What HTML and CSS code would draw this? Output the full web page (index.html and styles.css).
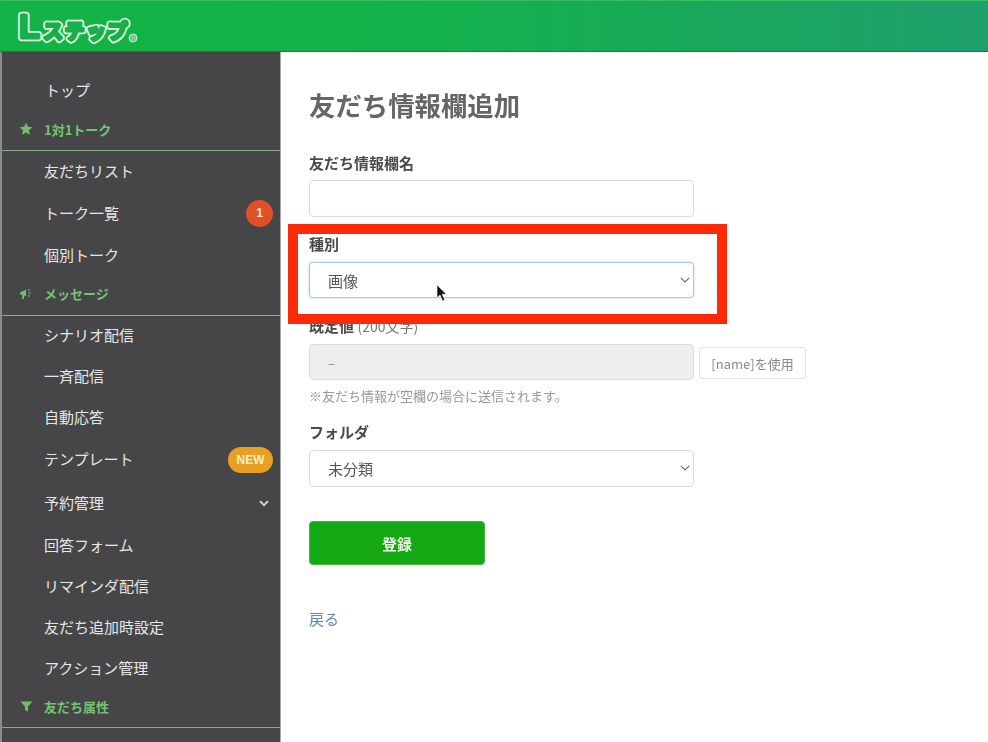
FILE: index.html
```html
<!DOCTYPE html>
<html lang="ja">
<head>
<meta charset="utf-8">
<title>友だち情報欄追加</title>
<link rel="stylesheet" href="styles.css">
</head>
<body>
<div class="page">
  <header class="topbar">
    <svg class="logo" width="125" height="46" viewBox="0 0 125 46">
      <defs>
        <text id="lg-l" class="lg-l" x="5" y="34.500">L</text>
        <text id="lg-k" class="lg-k" x="29" y="35.500">ステップ</text>
      </defs>
      <use href="#lg-l" class="lg-out"/>
      <use href="#lg-k" class="lg-out"/>
      <use href="#lg-l" class="lg-in"/>
      <use href="#lg-k" class="lg-in"/>
      <circle cx="119" cy="35" r="4" fill="#6fcf8e" stroke="#d5efd5" stroke-width="1"/>
    </svg>
  </header>
  <div class="body">
    <nav class="side">
      <a class="item first low">トップ</a>
      <div class="sec sec1">
        <svg class="sec-ic" width="14" height="14" viewBox="0 0 14 14"><path d="M7 .8l1.900 4 4.400.5-3.300 3 .9 4.400L7 10.500l-3.900 2.200.9-4.400-3.300-3 4.400-.5z" fill="#6fbf6a"/></svg>
        <span>1対1トーク</span>
      </div>
      <a class="item i42">友だちリスト</a>
      <a class="item i42">トーク一覧<span class="badge">1</span></a>
      <a class="item i42">個別トーク</a>
      <div class="sec sec2">
        <svg class="sec-ic" width="14" height="12" viewBox="0 0 14 12"><path d="M1 4.500l6-3v7l-2-.9V11H3.200V6.800L1 6.500z" fill="#6fbf6a"/><path d="M9 2.500l2-1M9.500 5h2.500M9 7.500l2 1" stroke="#6fbf6a" stroke-width="1.200" fill="none"/></svg>
        <span>メッセージ</span>
      </div>
      <a class="item low2">シナリオ配信</a>
      <a class="item low2">一斉配信</a>
      <a class="item low2">自動応答</a>
      <a class="item low">テンプレート<span class="new">NEW</span></a>
      <a class="item i45">予約管理
        <svg class="chev" width="10" height="7" viewBox="0 0 10 7"><path d="M1 1.200l4 4 4-4" stroke="#ddd" stroke-width="1.800" fill="none"/></svg>
      </a>
      <a class="item low">回答フォーム</a>
      <a class="item low">リマインダ配信</a>
      <a class="item low">友だち追加時設定</a>
      <a class="item low">アクション管理</a>
      <div class="sec sec3">
        <svg class="sec-ic" width="13" height="11" viewBox="0 0 13 11"><path d="M.5.500h12L8 5.500V10.500L5 9V5.500z" fill="#6fbf6a"/></svg>
        <span>友だち属性</span>
      </div>
      <a class="item">タグ管理</a>
    </nav>
    <main class="main">
      <h1 class="title">友だち情報欄追加</h1>
      <label class="lab lab-name">友だち情報欄名</label>
      <input class="field" type="text">
      <label class="lab lab-kind">種別</label>
      <div class="sel-wrap focus">
        <select class="field sel sel-focus"><option>画像</option></select>
        <svg class="sel-chev" width="10" height="6" viewBox="0 0 10 6"><path d="M.8.800L5 5l4.200-4.200" stroke="#666" stroke-width="1.100" fill="none"/></svg>
      </div>
      <label class="lab lab-def">既定値 <span class="thin">(200文字)</span></label>
      <div class="def-row">
        <input class="field dis" type="text" value="–" disabled>
        <button class="name-btn" type="button">[name]を使用</button>
      </div>
      <p class="hint">※友だち情報が空欄の場合に送信されます。</p>
      <label class="lab lab-folder">フォルダ</label>
      <div class="sel-wrap">
        <select class="field sel"><option>未分類</option></select>
        <svg class="sel-chev" width="10" height="6" viewBox="0 0 10 6"><path d="M.8.800L5 5l4.200-4.200" stroke="#666" stroke-width="1.100" fill="none"/></svg>
      </div>
      <button class="submit" type="button">登録</button>
      <a class="back">戻る</a>
    </main>
  </div>
  <div class="callout"></div>
  <svg class="cursor" width="13" height="19" viewBox="0 0 13 19"><path d="M1 1v13l3-3 2.500 6 2.200-1-2.500-5.800H10.500z" fill="#111" stroke="#fff" stroke-width=".6"/></svg>
</div>
</body>
</html>
```

FILE: styles.css
```css
* { box-sizing: border-box; }
html, body { margin: 0; padding: 0; background: #fff; }
body {
  width: 988px;
  height: 742px;
  overflow: hidden;
  font-family: "Noto Sans CJK JP", "Noto Sans", sans-serif;
}
.page {
  position: relative;
  width: 988px;
  height: 742px;
  overflow: hidden;
  filter: blur(0.45px);
}
.topbar {
  height: 52px;
  background: linear-gradient(90deg, #12b346 0%, #14b04c 45%, #1f9f6c 100%);
  border-top: 1px solid #3bbd62;
  border-bottom: 1px solid #16813f;
  padding-left: 14px;
  display: flex;
  align-items: flex-start;
}
.logo { display: block; margin-top: 2px; }
.lg-l { font: 700 34px "Liberation Sans", sans-serif; }
.lg-k { font: 700 20px "Noto Sans CJK JP", sans-serif; letter-spacing: 1.500px; }
.lg-out { fill: #e2f9df; stroke: #e2f9df; stroke-width: 6.500px; stroke-linejoin: round; stroke-linecap: round; }
.lg-in { fill: #15b04c; stroke: #15b04c; stroke-width: 3px; stroke-linejoin: round; stroke-linecap: round; }
.body { display: flex; height: 690px; }
.side {
  width: 281px;
  flex: none;
  height: 690px;
  overflow: hidden;
  background: #464648;
  border-left: 2px solid #8b8b8b;
  border-right: 1px solid #a9a9a9;
  padding-top: 18px;
  color: #e6e6e6;
  font-size: 15px;
}
.item {
  position: relative;
  display: flex;
  align-items: center;
  height: 41px;
  padding-left: 42px;
  line-height: 1;
}
.low { padding-bottom: 2px; }
.low2 { padding-bottom: 4px; }
.i42 { height: 42px; padding-bottom: 4px; }
.i45 { height: 45px; }
.first { padding-left: 43px; }
.sec {
  display: flex;
  align-items: center;
  height: 40px;
  padding-left: 42px;
  position: relative;
  border-bottom: 1px solid #8fa98d;
  color: #74c46f;
  font-size: 13px;
  font-weight: 700;
  line-height: 1;
}
.sec1 { padding-bottom: 2px; }
.sec2 { height: 39px; padding-bottom: 6px; }
.sec3 { height: 39px; padding-bottom: 4px; }
.sec-ic { position: absolute; left: 17px; top: 11px; }
.sec3 .sec-ic { left: 18px; top: 12px; }
.badge {
  position: absolute;
  left: 244px;
  top: 7px;
  width: 27px;
  height: 27px;
  border-radius: 50%;
  background: #df5027;
  color: #f6e6dc;
  font: 700 12px/27px "Liberation Sans", sans-serif;
  text-align: center;
}
.new {
  position: absolute;
  left: 226px;
  top: 8px;
  width: 45px;
  height: 26px;
  border-radius: 13px;
  background: #e7a021;
  color: #f8edd0;
  font: 700 12px/26px "Liberation Sans", sans-serif;
  text-align: center;
}
.chev { position: absolute; left: 257px; top: 20px; }
.main { flex: 1; padding-left: 28px; color: #555; }
.title {
  margin: 37px 0 0;
  font-size: 26.400px;
  line-height: 32px;
  font-weight: 700;
  color: #666;
}
.lab {
  display: block;
  font-size: 15px;
  font-weight: 700;
  line-height: 20px;
  color: #4a4a4a;
}
.lab-name { margin-top: 32px; }
.lab-kind { margin-top: 17px; }
.lab-def { margin-top: 18px; }
.lab-folder { margin-top: 17px; }
.thin { font-weight: 400; color: #777; font-size: 14px; }
.field {
  display: block;
  width: 385px;
  height: 37px;
  margin: 7px 0 0;
  padding: 0 18px;
  border: 1px solid #dcdcdc;
  border-radius: 4px;
  background: #fff;
  color: #555;
  font: 400 15px "Noto Sans CJK JP", sans-serif;
}
.sel-wrap { position: relative; width: 385px; margin-top: 8px; }
.sel { margin: 0; appearance: none; -webkit-appearance: none; }
.sel-focus { height: 36px; border-color: #a9c8e2; box-shadow: 0 0 3px #b9d6ee; }
.sel-chev { position: absolute; right: 4px; top: 15px; }
.def-row { display: flex; align-items: center; gap: 5px; margin-top: 8px; }
.def-row .field { margin: 0; }
.dis { height: 36px; background: #eeeeec; color: #888; font-size: 13px; }
.name-btn {
  width: 107px;
  height: 32px;
  margin-top: 2px;
  padding: 0;
  border: 1px solid #e2e2e2;
  border-radius: 3px;
  background: #fff;
  color: #888;
  font: 400 13px "Noto Sans CJK JP", sans-serif;
}
.hint { margin: 7px 0 0; font-size: 13px; line-height: 18px; color: #999; }
.submit {
  display: block;
  width: 176px;
  height: 44px;
  margin-top: 34px;
  border: 1px solid #3db83a;
  border-radius: 4px;
  background: #14a814;
  color: #eaf7e6;
  font: 700 15px "Noto Sans CJK JP", sans-serif;
}
.back {
  display: block;
  margin-top: 44px;
  font-size: 15px;
  line-height: 20px;
  color: #6488a8;
}
.callout {
  position: absolute;
  left: 288px;
  top: 224px;
  width: 439px;
  height: 100px;
  border: 10px solid #fb2a08;
}
.cursor { position: absolute; left: 436px; top: 284px; }
```
